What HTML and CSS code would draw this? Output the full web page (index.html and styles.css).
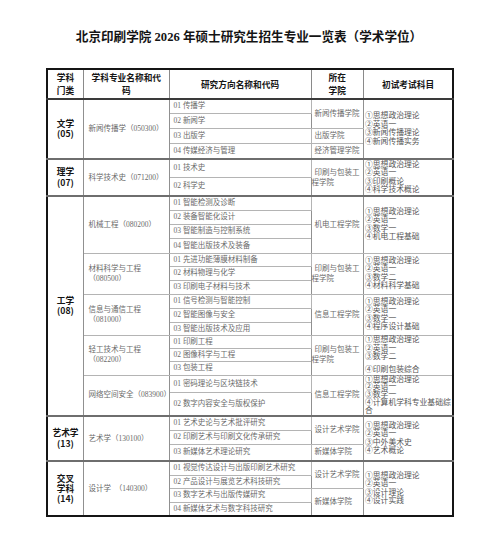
FILE: index.html
```html
<!DOCTYPE html>
<html lang="zh-CN">
<head>
<meta charset="utf-8">
<title>北京印刷学院 2026 年硕士研究生招生专业一览表（学术学位）</title>
<link rel="stylesheet" href="styles.css">
</head>
<body>
<div class="page">
  <h1 class="title">北京印刷学院 2026 年硕士研究生招生专业一览表（学术学位）</h1>
  <table class="plan">
    <colgroup>
      <col class="c1"><col class="c2"><col class="c3"><col class="c4"><col class="c5">
    </colgroup>
    <thead>
      <tr>
        <th>学科<br>门类</th>
        <th>学科专业名称和代<br>码</th>
        <th>研究方向名称和代码</th>
        <th>所在<br>学院</th>
        <th>初试考试科目</th>
      </tr>
    </thead>
    <tbody>
      <tr class="grp r14">
        <td class="cat" rowspan="4">文学<br>(05)</td>
        <td class="maj" rowspan="4">新闻传播学（050300）</td>
        <td class="dir">01 传播学</td>
        <td class="col" rowspan="2">新闻传播学院</td>
        <td class="exam" rowspan="4">①思想政治理论<br>②英语一<br>③新闻传播理论<br>④新闻传播实务</td>
      </tr>
      <tr class="r15"><td class="dir">02 新闻学</td></tr>
      <tr class="r15"><td class="dir">03 出版学</td><td class="col">出版学院</td></tr>
      <tr class="r16"><td class="dir">04 传媒经济与管理</td><td class="col">经济管理学院</td></tr>

      <tr class="grp r18">
        <td class="cat" rowspan="2">理学<br>(07)</td>
        <td class="maj" rowspan="2">科学技术史（071200）</td>
        <td class="dir">01 技术史</td>
        <td class="col" rowspan="2">印刷与包装工<br>程学院</td>
        <td class="exam" rowspan="2">①思想政治理论<br>②英语一<br>③印刷概论<br>④科学技术概论</td>
      </tr>
      <tr class="r19"><td class="dir">02 科学史</td></tr>

      <tr class="grp r14">
        <td class="cat" rowspan="15">工学<br>(08)</td>
        <td class="maj" rowspan="4">机械工程（080200）</td>
        <td class="dir">01 智能检测及诊断</td>
        <td class="col" rowspan="4">机电工程学院</td>
        <td class="exam" rowspan="4">①思想政治理论<br>②英语一<br>③数学一<br>④机电工程基础</td>
      </tr>
      <tr class="r14"><td class="dir">02 装备智能化设计</td></tr>
      <tr class="r14"><td class="dir">03 智能制造与控制系统</td></tr>
      <tr class="r15"><td class="dir">04 智能出版技术及装备</td></tr>

      <tr class="sub r13">
        <td class="maj" rowspan="3">材料科学与工程<br>（080500）</td>
        <td class="dir">01 先进功能薄膜材料制备</td>
        <td class="col" rowspan="3">印刷与包装工<br>程学院</td>
        <td class="exam" rowspan="3">①思想政治理论<br>②英语一<br>③数学二<br>④材料科学基础</td>
      </tr>
      <tr class="r14"><td class="dir">02 材料物理与化学</td></tr>
      <tr class="r14"><td class="dir">03 印刷电子材料与技术</td></tr>

      <tr class="sub r14">
        <td class="maj" rowspan="3">信息与通信工程<br>（081000）</td>
        <td class="dir">01 信号检测与智能控制</td>
        <td class="col" rowspan="3">信息工程学院</td>
        <td class="exam" rowspan="3">①思想政治理论<br>②英语一<br>③数学一<br>④程序设计基础</td>
      </tr>
      <tr class="r14"><td class="dir">02 智能图像与安全</td></tr>
      <tr class="r13"><td class="dir">03 智能出版技术及应用</td></tr>

      <tr class="sub r13">
        <td class="maj" rowspan="3">轻工技术与工程<br>（082200）</td>
        <td class="dir">01 印刷工程</td>
        <td class="col" rowspan="3">印刷与包装工<br>程学院</td>
        <td class="exam" rowspan="3">①思想政治理论<br>②英语一<br>③数学二<br><span class="gap">④印刷包装综合</span></td>
      </tr>
      <tr class="r13"><td class="dir">02 图像科学与工程</td></tr>
      <tr class="r14"><td class="dir">03 包装工程</td></tr>

      <tr class="sub r17">
        <td class="maj" rowspan="2">网络空间安全（083900）</td>
        <td class="dir">01 密码理论与区块链技术</td>
        <td class="col" rowspan="2">信息工程学院</td>
        <td class="exam exam-tight" rowspan="2">①思想政治理论<br>②英语一<br>③数学一<br>④计算机学科专业基础综<br>合</td>
      </tr>
      <tr class="r23"><td class="dir">02 数字内容安全与版权保护</td></tr>

      <tr class="grp r14">
        <td class="cat" rowspan="3">艺术学<br>(13)</td>
        <td class="maj" rowspan="3">艺术学（130100）</td>
        <td class="dir">01 艺术史论与艺术批评研究</td>
        <td class="col" rowspan="2">设计艺术学院</td>
        <td class="exam" rowspan="3">①思想政治理论<br>②英语一<br>③中外美术史<br>④艺术概论</td>
      </tr>
      <tr class="r14"><td class="dir">02 印刷艺术与印刷文化传承研究</td></tr>
      <tr class="r17"><td class="dir">03 新媒体艺术理论研究</td><td class="col">新媒体学院</td></tr>

      <tr class="grp r14">
        <td class="cat cat-tight" rowspan="4">交叉<br>学科<br>(14)</td>
        <td class="maj" rowspan="4">设计学　（140300）</td>
        <td class="dir">01 视觉传达设计与出版印刷艺术研究</td>
        <td class="col" rowspan="2">设计艺术学院</td>
        <td class="exam" rowspan="4">①思想政治理论<br>②英语一<br>③设计理论<br>④设计实践</td>
      </tr>
      <tr class="r13"><td class="dir">02 产品设计与展览艺术科技研究</td></tr>
      <tr class="r14"><td class="dir">03 数字艺术与出版传媒研究</td><td class="col" rowspan="2">新媒体学院</td></tr>
      <tr class="r14"><td class="dir">04 新媒体艺术与数字科技研究</td></tr>
    </tbody>
  </table>
</div>
</body>
</html>
```
FILE: styles.css
```css
body {
  margin: 0;
  background: #ffffff;
}

.page {
  width: 406px;
  margin-left: 46px;
  padding-top: 29px;
}

.title {
  margin: 0 0 23px;
  font-family: "Liberation Serif", "Noto Sans CJK SC", serif;
  font-weight: bold;
  font-size: 12.6px;
  line-height: 16px;
  text-align: center;
  white-space: nowrap;
  color: #141414;
}

.plan {
  width: 406px;
  border-collapse: collapse;
  table-layout: fixed;
  border: 2px solid #151515;
  font-family: "Liberation Serif", "Noto Sans CJK SC", serif;
}

.c1 { width: 36.5px; }
.c2 { width: 85.5px; }
.c3 { width: 142px; }
.c4 { width: 52.5px; }
.c5 { width: 89.5px; }

.plan th {
  height: 28px;
  padding: 0;
  border: 1px solid #8a8a8a;
  border-bottom: 2px solid #3a3a3a;
  font-family: "Noto Sans CJK SC", sans-serif;
  font-weight: bold;
  font-size: 8.7px;
  line-height: 13px;
  color: #161616;
  text-align: center;
  vertical-align: middle;
}

.plan td {
  padding: 0;
  border: 1px solid #b4b4b4;
  vertical-align: middle;
  font-size: 7.5px;
  line-height: 10px;
  color: #6a6a6a;
  white-space: nowrap;
}

.plan td.cat,
.plan td.maj,
.plan td.col,
.plan td.exam {
  border-left-color: #909090;
  border-right-color: #909090;
}

.plan tr.grp td {
  border-top: 2px solid #6e6e6e;
}

.plan tr.sub td {
  border-top: 1.5px solid #808080;
}

.r13 { height: 13px; }
.r14 { height: 14px; }
.r15 { height: 15px; }
.r16 { height: 16px; }
.r17 { height: 17px; }
.r18 { height: 18px; }
.r19 { height: 19px; }
.r23 { height: 23px; }

.plan td.cat {
  font-family: "Noto Sans CJK SC", sans-serif;
  font-weight: bold;
  font-size: 8.7px;
  line-height: 10.5px;
  color: #151515;
  text-align: center;
}

.plan td.cat-tight {
  line-height: 10px;
}

.plan td.maj {
  padding-left: 4.5px;
}

.plan td.dir {
  padding-left: 4px;
}

.plan td.col {
  text-indent: 3px;
  padding-left: 0;
}

.plan td.exam {
  padding-left: 1px;
  font-size: 7.8px;
  line-height: 8.5px;
  color: #555555;
}

.plan td.exam-tight {
  line-height: 7.9px;
}

.gap {
  display: inline-block;
  margin-top: 4px;
}
```
